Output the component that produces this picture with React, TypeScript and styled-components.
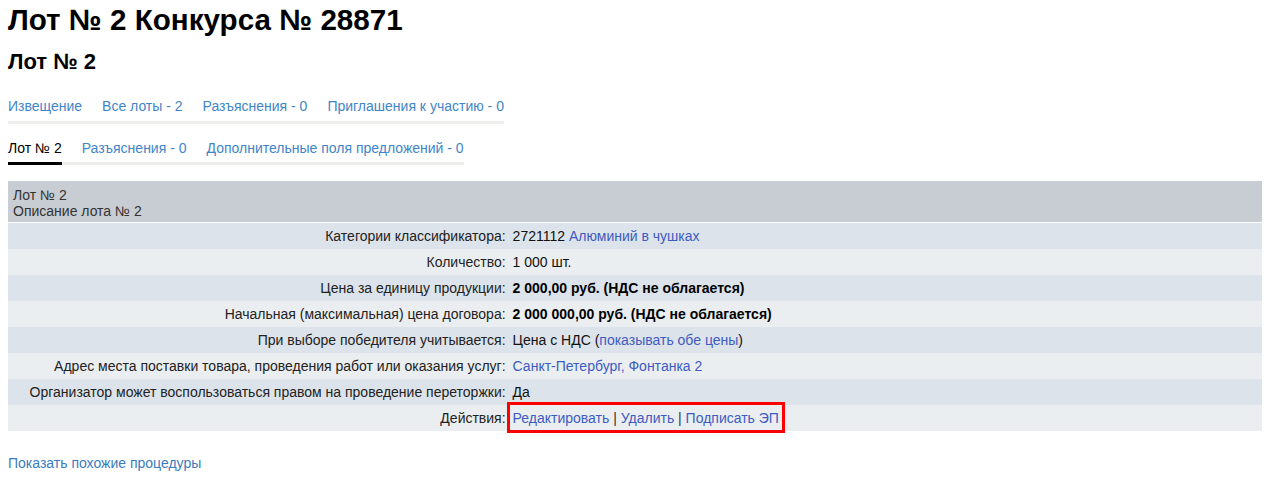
import styled, { createGlobalStyle } from "styled-components";

const GlobalStyle = createGlobalStyle`
  body {
    margin: 0;
    background: #fff;
    font-family: "Liberation Sans", Arial, sans-serif;
    font-size: 14px;
    color: #222;
  }
`;

const Page = styled.div`
  padding: 0 3px 0 8px;
`;

const Title = styled.h1`
  margin: 2px 0 0;
  font-size: 29.6px;
  line-height: 36px;
  font-weight: bold;
  color: #000;
`;

const Subtitle = styled.h2`
  margin: 11px 0 0;
  font-size: 22px;
  line-height: 26px;
  font-weight: bold;
  color: #000;
`;

const Tabs = styled.ul<{ $top: number }>`
  display: inline-flex;
  gap: 20px;
  margin: ${({ $top }) => $top}px 0 0;
  padding: 0;
  list-style: none;
  border-bottom: 3px solid #eeeeec;
`;

const TabsRow = styled.div``;

const Tab = styled.li<{ $active?: boolean; $pad: number }>`
  line-height: 16px;
  padding-bottom: ${({ $pad }) => $pad}px;
  margin-bottom: -3px;
  border-bottom: 3px solid ${({ $active }) => ($active ? "#000" : "transparent")};
  color: ${({ $active }) => ($active ? "#000" : "#3f85c8")};
  cursor: pointer;
`;

const Table = styled.table`
  width: 100%;
  margin-top: 16px;
  border-collapse: separate;
  border-spacing: 0;
`;

const HeadCell = styled.th`
  background: #c8ccd3;
  text-align: left;
  font-weight: normal;
  color: #333;
  line-height: 16px;
  padding: 6px 5px 3px;
  border-bottom: 1px solid #fff;
`;

const Row = styled.tr`
  &:nth-child(odd) td {
    background: #dde3ea;
  }
  &:nth-child(even) td {
    background: #ebeef1;
  }
`;

const Label = styled.td`
  width: 40%;
  text-align: right;
  line-height: 16px;
  padding: 5px 4px 5px 0;
  color: #222;
  white-space: nowrap;
`;

const Value = styled.td`
  line-height: 16px;
  padding: 5px 0 5px 3px;
  color: #111;
`;

const Link = styled.a<{ $tone?: "table" | "page" }>`
  color: ${({ $tone }) => ($tone === "page" ? "#3a7bc0" : "#3d5cc2")};
  text-decoration: none;
  cursor: pointer;
`;

const Strong = styled.b`
  color: #000;
`;

const Highlight = styled.span`
  border: 3px solid #ff0000;
  padding: 5px 3px 4px;
  margin-left: -6px;
`;

const Sep = styled.span`
  color: #333;
`;

const Footer = styled.div`
  margin-top: 24px;
  line-height: 16px;
`;

const rows: { label: string; value: React.ReactNode }[] = [
  {
    label: "Категории классификатора:",
    value: (
      <>
        2721112 <Link>Алюминий в чушках</Link>
      </>
    ),
  },
  { label: "Количество:", value: "1 000 шт." },
  {
    label: "Цена за единицу продукции:",
    value: <Strong>2 000,00 руб. (НДС не облагается)</Strong>,
  },
  {
    label: "Начальная (максимальная) цена договора:",
    value: <Strong>2 000 000,00 руб. (НДС не облагается)</Strong>,
  },
  {
    label: "При выборе победителя учитывается:",
    value: (
      <>
        Цена с НДС (<Link>показывать обе цены</Link>)
      </>
    ),
  },
  {
    label: "Адрес места поставки товара, проведения работ или оказания услуг:",
    value: <Link>Санкт-Петербург, Фонтанка 2</Link>,
  },
  {
    label: "Организатор может воспользоваться правом на проведение переторжки:",
    value: "Да",
  },
  {
    label: "Действия:",
    value: (
      <Highlight>
        <Link>Редактировать</Link> <Sep>|</Sep> <Link>Удалить</Link>{" "}
        <Sep>|</Sep> <Link>Подписать ЭП</Link>
      </Highlight>
    ),
  },
];

export default function App() {
  return (
    <Page>
      <GlobalStyle />
      <Title>Лот № 2 Конкурса № 28871</Title>
      <Subtitle>Лот № 2</Subtitle>
      <TabsRow>
        <Tabs $top={23}>
          <Tab $pad={7}>Извещение</Tab>
          <Tab $pad={7}>Все лоты - 2</Tab>
          <Tab $pad={7}>Разъяснения - 0</Tab>
          <Tab $pad={7}>Приглашения к участию - 0</Tab>
        </Tabs>
      </TabsRow>
      <TabsRow>
        <Tabs $top={16}>
          <Tab $pad={6} $active>
            Лот № 2
          </Tab>
          <Tab $pad={6}>Разъяснения - 0</Tab>
          <Tab $pad={6}>Дополнительные поля предложений - 0</Tab>
        </Tabs>
      </TabsRow>
      <Table>
        <thead>
          <tr>
            <HeadCell colSpan={2}>
              Лот № 2
              <br />
              Описание лота № 2
            </HeadCell>
          </tr>
        </thead>
        <tbody>
          {rows.map((row) => (
            <Row key={row.label}>
              <Label>{row.label}</Label>
              <Value>{row.value}</Value>
            </Row>
          ))}
        </tbody>
      </Table>
      <Footer>
        <Link $tone="page">Показать похожие процедуры</Link>
      </Footer>
    </Page>
  );
}
